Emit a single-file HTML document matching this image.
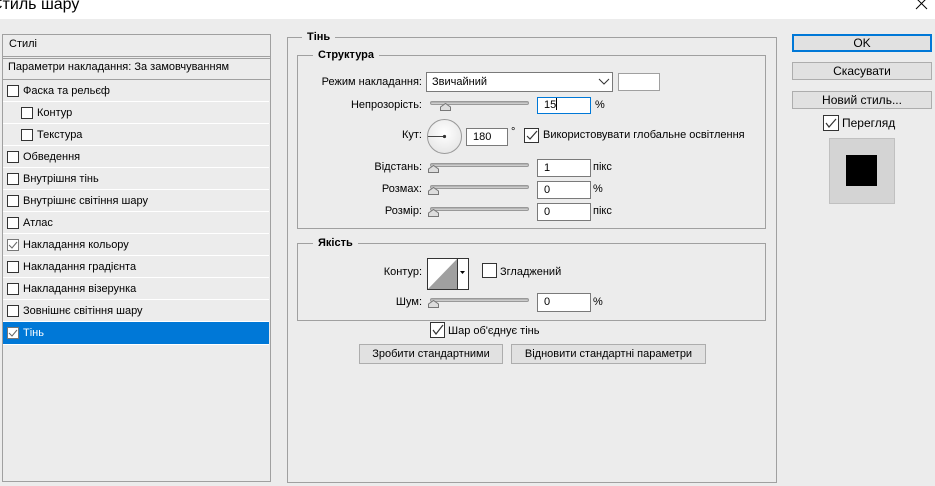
<!DOCTYPE html>
<html><head><meta charset="utf-8"><style>
*{box-sizing:border-box;margin:0;padding:0}
body{width:935px;height:486px;overflow:hidden;background:#ececec;font-family:"Liberation Sans",sans-serif;font-size:11px;color:#000;position:relative}
.a{position:absolute}
.t{position:absolute;white-space:nowrap;line-height:14px}
.r{text-align:right}
.row{position:absolute;left:3px;width:266px;height:22px;border-bottom:1px solid #fff}
.row .cb{position:absolute;top:5px;width:12px;height:12px;border:1px solid #333;background:#fff}
.row span{position:absolute;top:5px;white-space:nowrap}
.inp{position:absolute;background:#fff;border:1px solid #7a7a7a;padding-left:6px;line-height:15px}
.track{position:absolute;height:4px;border-radius:2px;background:linear-gradient(#a8a8a8,#d8d8d8);border:1px solid #999}
.thumb{position:absolute;width:11px;height:8px}
.box{position:absolute;border:1px solid #a0a0a0}
.lg{position:absolute;background:#ececec;font-weight:bold;padding:0 5px;line-height:14px}
.btn{position:absolute;background:#e1e1e1;border:1px solid #adadad;text-align:center}
.ck{position:absolute;width:15px;height:15px;border:1px solid #333;background:#fff}
</style></head><body>
<div class="a" style="left:0;top:0;width:935px;height:19px;background:#fff"></div>
<div class="t" style="left:-9px;top:-4px;font-size:16px;line-height:18px">Стиль шару</div>
<svg class="a" style="left:915px;top:-2px" width="14" height="12"><path d="M1 0 L12 11 M12 0 L1 11" stroke="#000" stroke-width="1"/></svg>

<div class="a" style="left:2px;top:34px;width:269px;height:448px;border:1px solid #a0a0a0;background:#ececec"></div>
<div class="t" style="left:9px;top:37px">Стилі</div>
<div class="a" style="left:3px;top:56px;width:267px;height:3px;border-top:1px solid #a0a0a0;border-bottom:1px solid #a0a0a0"></div>
<div class="t" style="left:8px;top:60px">Параметри накладання: За замовчуванням</div>
<div class="a" style="left:3px;top:79px;width:267px;height:1px;background:#a0a0a0"></div>
<div class="row" style="top:80px"><div class="cb" style="left:4px"></div><span style="left:20px">Фаска та рельєф</span></div>
<div class="row" style="top:102px"><div class="cb" style="left:18px"></div><span style="left:34px">Контур</span></div>
<div class="row" style="top:124px"><div class="cb" style="left:18px"></div><span style="left:34px">Текстура</span></div>
<div class="row" style="top:146px"><div class="cb" style="left:4px"></div><span style="left:20px">Обведення</span></div>
<div class="row" style="top:168px"><div class="cb" style="left:4px"></div><span style="left:20px">Внутрішня тінь</span></div>
<div class="row" style="top:190px"><div class="cb" style="left:4px"></div><span style="left:20px">Внутрішнє світіння шару</span></div>
<div class="row" style="top:212px"><div class="cb" style="left:4px"></div><span style="left:20px">Атлас</span></div>
<div class="row" style="top:234px"><div class="cb" style="left:4px;border-color:#777"><svg width="10" height="10" style="position:absolute;left:0;top:0"><path d="M1 5 L4 8 L9 2" stroke="#666" fill="none"/></svg></div><span style="left:20px">Накладання кольору</span></div>
<div class="row" style="top:256px"><div class="cb" style="left:4px"></div><span style="left:20px">Накладання градієнта</span></div>
<div class="row" style="top:278px"><div class="cb" style="left:4px"></div><span style="left:20px">Накладання візерунка</span></div>
<div class="row" style="top:300px"><div class="cb" style="left:4px"></div><span style="left:20px">Зовнішнє світіння шару</span></div>
<div class="row" style="top:322px;background:#0078d7;height:23px"><div class="cb" style="left:4px;border-color:#777"><svg width="10" height="10" style="position:absolute;left:0;top:0"><path d="M1 5 L4 8 L9 2" stroke="#666" fill="none"/></svg></div><span style="left:20px;color:#fff">Тінь</span></div>

<div class="box" style="left:287px;top:37px;width:490px;height:446px"></div>
<div class="lg" style="left:302px;top:30px">Тінь</div>
<div class="box" style="left:297px;top:55px;width:469px;height:174px"></div>
<div class="lg" style="left:313px;top:48px">Структура</div>

<div class="t r" style="left:300px;width:122px;top:75px">Режим накладання:</div>
<div class="a" style="left:426px;top:72px;width:187px;height:20px;border:1px solid #7a7a7a;background:#fff"></div>
<div class="t" style="left:432px;top:75px">Звичайний</div>
<svg class="a" style="left:598px;top:78px" width="12" height="8"><path d="M1 1 L6 6 L11 1" stroke="#333" fill="none"/></svg>
<div class="a" style="left:618px;top:73px;width:42px;height:18px;border:1px solid #a0a0a0;background:#fff"></div>

<div class="t r" style="left:300px;width:122px;top:98px">Непрозорість:</div>
<div class="track" style="left:430px;top:101px;width:99px"></div>
<svg class="thumb" style="left:440px;top:103px"><path d="M0.5 7.5 L0.5 4 L5.5 0.5 L10.5 4 L10.5 7.5 Z" fill="#ddd" stroke="#777"/></svg>
<div class="inp" style="left:537px;top:97px;width:54px;height:17px;border-color:#0078d7">15<span style="display:inline-block;width:1px;height:12px;background:#000;vertical-align:-2px"></span></div>
<div class="t" style="left:595px;top:98px">%</div>

<div class="t r" style="left:300px;width:122px;top:128px">Кут:</div>
<div class="a" style="left:427px;top:119px;width:35px;height:35px;border-radius:50%;border:1px solid #999;background:radial-gradient(circle at 50% 40%,#fff,#e0e0e0)"></div>
<svg class="a" style="left:427px;top:119px" width="35" height="35"><path d="M1 17.5 L17.5 17.5" stroke="#444"/><circle cx="17.5" cy="17.5" r="1.6" fill="#333"/></svg>
<div class="inp" style="left:466px;top:128px;width:42px;height:18px;line-height:16px">180</div>
<div class="t" style="left:511px;top:125px">°</div>
<div class="ck" style="left:524px;top:128px"><svg width="13" height="13" style="position:absolute;left:0;top:0"><path d="M2 7 L5 10 L12 2" stroke="#333" fill="none" stroke-width="1.2"/></svg></div>
<div class="t" style="left:543px;top:128px">Використовувати глобальне освітлення</div>

<div class="t r" style="left:300px;width:122px;top:160px">Відстань:</div>
<div class="track" style="left:430px;top:163px;width:99px"></div>
<svg class="thumb" style="left:428px;top:165px"><path d="M0.5 7.5 L0.5 4 L5.5 0.5 L10.5 4 L10.5 7.5 Z" fill="#ddd" stroke="#777"/></svg>
<div class="inp" style="left:537px;top:159px;width:54px;height:18px;line-height:16px">1</div>
<div class="t" style="left:593px;top:160px">пікс</div>

<div class="t r" style="left:300px;width:122px;top:182px">Розмах:</div>
<div class="track" style="left:430px;top:185px;width:99px"></div>
<svg class="thumb" style="left:428px;top:187px"><path d="M0.5 7.5 L0.5 4 L5.5 0.5 L10.5 4 L10.5 7.5 Z" fill="#ddd" stroke="#777"/></svg>
<div class="inp" style="left:537px;top:181px;width:54px;height:18px;line-height:16px">0</div>
<div class="t" style="left:593px;top:182px">%</div>

<div class="t r" style="left:300px;width:122px;top:204px">Розмір:</div>
<div class="track" style="left:430px;top:207px;width:99px"></div>
<svg class="thumb" style="left:428px;top:209px"><path d="M0.5 7.5 L0.5 4 L5.5 0.5 L10.5 4 L10.5 7.5 Z" fill="#ddd" stroke="#777"/></svg>
<div class="inp" style="left:537px;top:203px;width:54px;height:18px;line-height:16px">0</div>
<div class="t" style="left:593px;top:204px">пікс</div>

<div class="box" style="left:297px;top:243px;width:469px;height:78px"></div>
<div class="lg" style="left:313px;top:236px">Якість</div>
<div class="t r" style="left:300px;width:122px;top:265px">Контур:</div>
<div class="a" style="left:427px;top:258px;width:42px;height:32px;border:1px solid #333;background:#fff"></div>
<svg class="a" style="left:428px;top:259px" width="40" height="30"><path d="M0 30 L29 0 L29 30 Z" fill="#a0a0a0"/><path d="M29.5 0 L29.5 30" stroke="#333"/><path d="M32 12 L37 12 L34.5 15 Z" fill="#000"/></svg>
<div class="ck" style="left:482px;top:263px"></div>
<div class="t" style="left:500px;top:265px">Згладжений</div>
<div class="t r" style="left:300px;width:122px;top:295px">Шум:</div>
<div class="track" style="left:430px;top:298px;width:99px"></div>
<svg class="thumb" style="left:428px;top:300px"><path d="M0.5 7.5 L0.5 4 L5.5 0.5 L10.5 4 L10.5 7.5 Z" fill="#ddd" stroke="#777"/></svg>
<div class="inp" style="left:537px;top:293px;width:54px;height:19px;line-height:17px">0</div>
<div class="t" style="left:593px;top:295px">%</div>

<div class="ck" style="left:430px;top:322px;height:16px"><svg width="13" height="14" style="position:absolute;left:0;top:0"><path d="M2 7 L5 11 L12 2" stroke="#333" fill="none" stroke-width="1.2"/></svg></div>
<div class="t" style="left:448px;top:324px">Шар об'єднує тінь</div>
<div class="btn" style="left:359px;top:344px;width:144px;height:20px;line-height:18px">Зробити стандартними</div>
<div class="btn" style="left:511px;top:344px;width:195px;height:20px;line-height:18px">Відновити стандартні параметри</div>

<div class="btn" style="left:792px;top:34px;width:140px;height:18px;border:2px solid #0078d7;line-height:14px;font-size:12px">OK</div>
<div class="btn" style="left:792px;top:62px;width:140px;height:18px;line-height:16px;font-size:12px">Скасувати</div>
<div class="btn" style="left:792px;top:91px;width:140px;height:18px;line-height:16px;font-size:12px">Новий стиль...</div>
<div class="ck" style="left:823px;top:115px;width:16px;height:16px"><svg width="14" height="14" style="position:absolute;left:0;top:0"><path d="M2 7 L5 11 L12 3" stroke="#333" fill="none" stroke-width="1.2"/></svg></div>
<div class="t" style="left:842px;top:116px;font-size:12px">Перегляд</div>
<div class="a" style="left:829px;top:138px;width:66px;height:66px;background:#d4d4d4;border:1px solid #c0c0c0"></div>
<div class="a" style="left:846px;top:155px;width:31px;height:31px;background:#000"></div>
</body></html>
